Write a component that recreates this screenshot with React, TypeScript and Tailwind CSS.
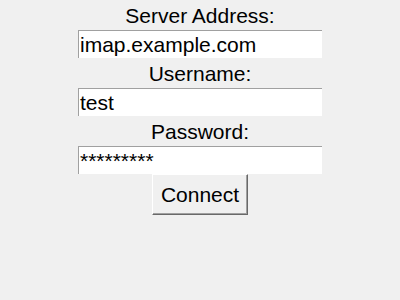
import React from 'react';

const Field: React.FC<{ label: string; value: string }> = ({ label, value }) => (
  <>
    <div className="h-[30px] flex items-center justify-center text-[21px] leading-none text-black">
      {label}
    </div>
    <div className="w-[244px] h-[28px] bg-white border-t border-l border-[#a0a0a0] flex items-center pl-[1px] text-[21px] leading-none text-black overflow-hidden">
      {value}
    </div>
  </>
);

export default function App() {
  return (
    <div
      className="w-[400px] h-[300px] bg-[#f0f0f0] flex flex-col items-center"
      style={{ fontFamily: '"Liberation Sans", Arial, sans-serif' }}
    >
      <Field label="Server Address:" value="imap.example.com" />
      <Field label="Username:" value="test" />
      <Field label="Password:" value="*********" />
      <button className="w-[96px] h-[41px] bg-[#f0f0f0] text-[21px] leading-none text-black border-t border-l border-white border-r border-b border-r-[#696969] border-b-[#696969] shadow-[inset_-1px_-1px_0_#a0a0a0]">
        Connect
      </button>
    </div>
  );
}
